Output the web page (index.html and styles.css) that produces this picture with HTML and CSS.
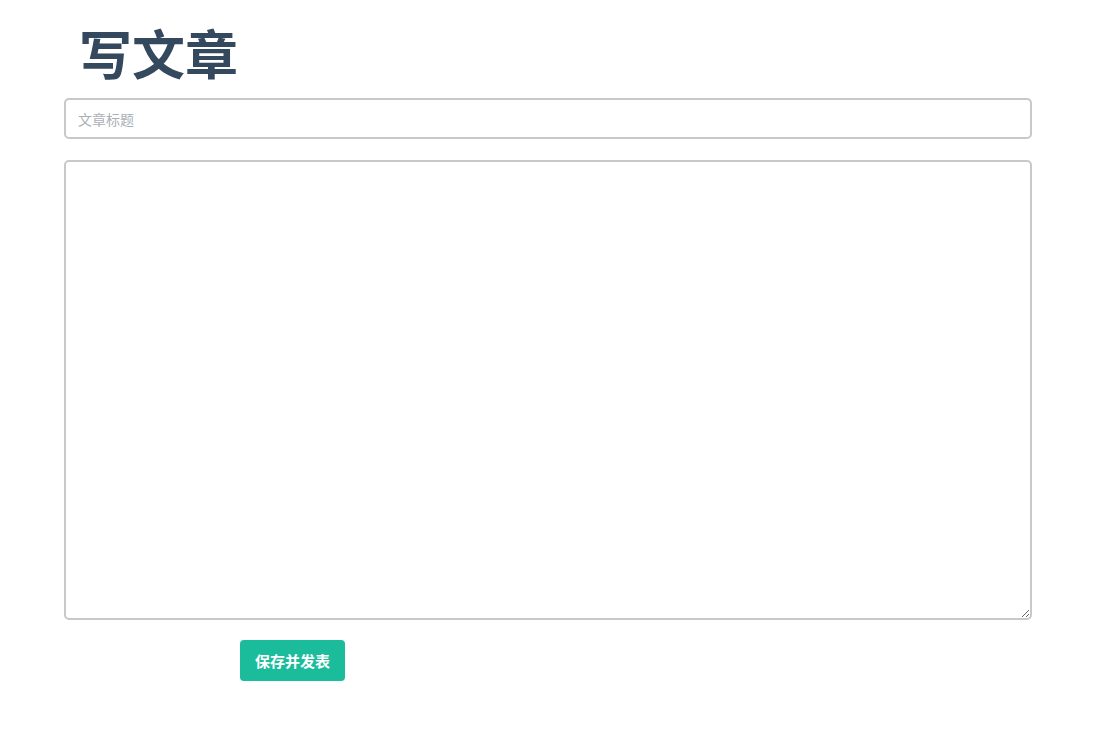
FILE: index.html
```html
<!DOCTYPE html>
<html lang="zh">
<head>
<meta charset="utf-8">
<link rel="stylesheet" href="styles.css">
</head>
<body>
<div class="page">
  <h1 class="title">写文章</h1>
  <input class="title-input" type="text" placeholder="文章标题">
  <textarea class="body-input"></textarea>
  <div class="actions">
    <button class="publish">保存并发表</button>
  </div>
</div>
</body>
</html>
```

FILE: styles.css
```css
html, body {
  margin: 0;
  padding: 0;
  background: #fff;
}
body {
  font-family: "Noto Sans CJK SC", "Noto Sans", sans-serif;
}
.page {
  width: 968px;
  padding: 18px 0 0 64px;
  display: flex;
  flex-direction: column;
}
.title {
  margin: 0 0 12px 15px;
  font-size: 53px;
  line-height: 68px;
  font-weight: 700;
  color: #34495e;
}
.title-input {
  box-sizing: border-box;
  width: 968px;
  height: 41px;
  border: 2px solid #c8c8c8;
  border-radius: 5px;
  padding: 0 12px;
  font-size: 14px;
  font-family: inherit;
  color: #333;
  outline: none;
}
.title-input::placeholder {
  color: #a9b0b6;
}
.body-input {
  box-sizing: border-box;
  width: 968px;
  height: 460px;
  margin-top: 21px;
  border: 2px solid #c8c8c8;
  border-radius: 5px;
  padding: 10px 12px;
  font-family: inherit;
  font-size: 14px;
  outline: none;
  resize: both;
}
.actions {
  display: flex;
  padding: 20px 0 0 176px;
}
.publish {
  width: 105px;
  height: 41px;
  border: none;
  border-radius: 4px;
  background: #1abc9c;
  color: #fff;
  font-family: inherit;
  font-size: 15px;
  font-weight: 700;
  cursor: pointer;
}
```
